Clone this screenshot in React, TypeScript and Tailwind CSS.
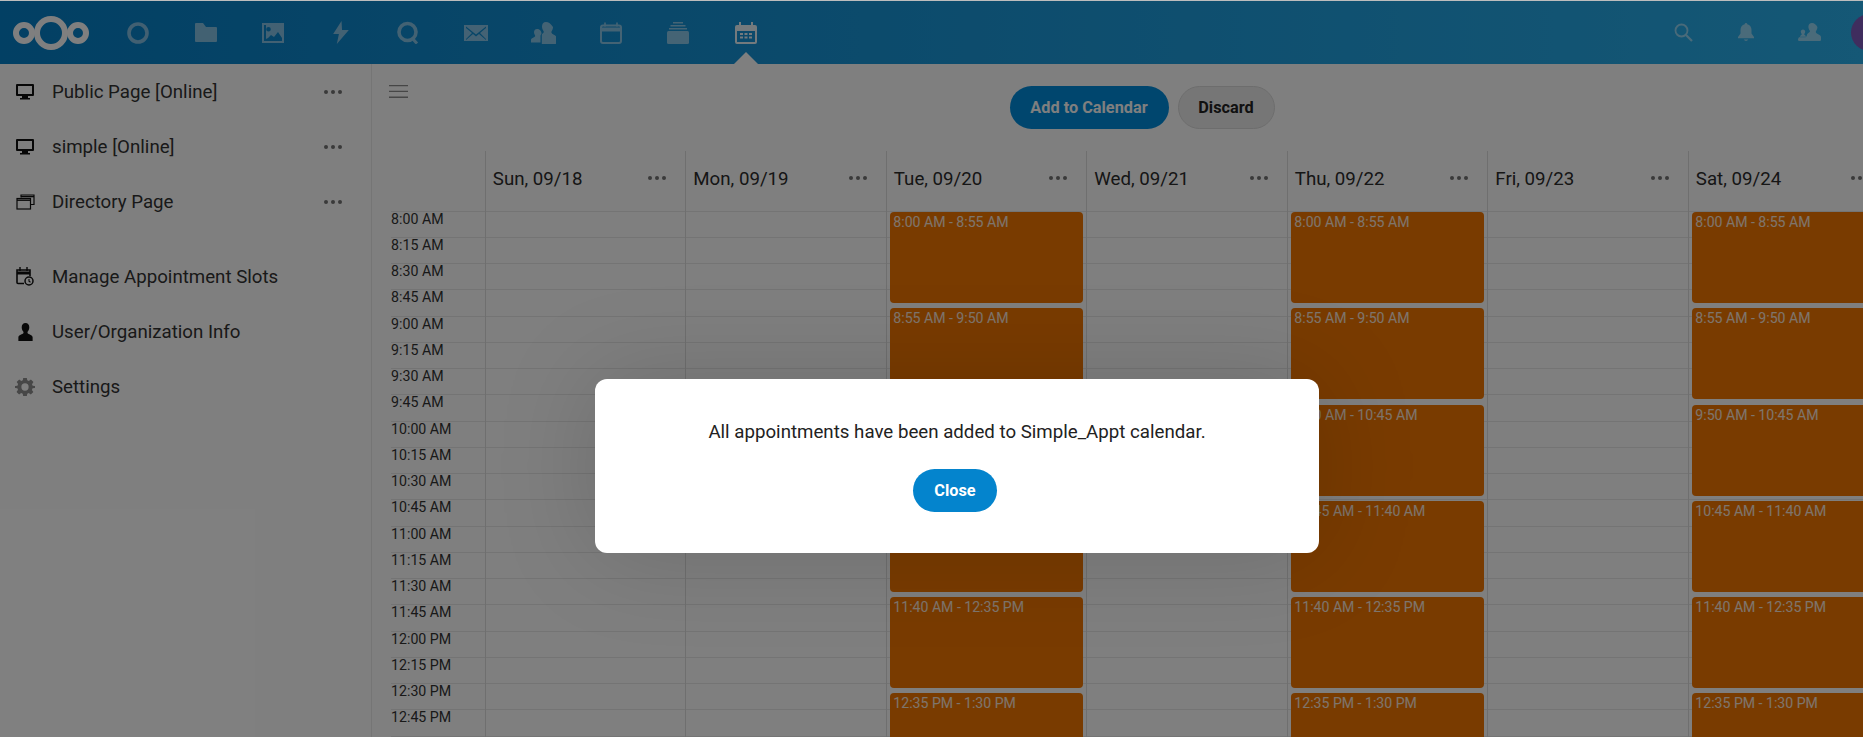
import type { ReactNode } from "react";

const slots = ["8:00", "8:15", "8:30", "8:45", "9:00", "9:15", "9:30", "9:45", "10:00", "10:15", "10:30", "10:45", "11:00", "11:15", "11:30", "11:45"];
const times = [
  ...slots.map((s) => `${s} AM`),
  "12:00 PM",
  "12:15 PM",
  "12:30 PM",
  "12:45 PM",
  "",
];
const days = [
  { label: "Sun, 09/18", booked: false },
  { label: "Mon, 09/19", booked: false },
  { label: "Tue, 09/20", booked: true },
  { label: "Wed, 09/21", booked: false },
  { label: "Thu, 09/22", booked: true },
  { label: "Fri, 09/23", booked: false },
  { label: "Sat, 09/24", booked: true },
];
const appointments = [
  "8:00 AM - 8:55 AM",
  "8:55 AM - 9:50 AM",
  "9:50 AM - 10:45 AM",
  "10:45 AM - 11:40 AM",
  "11:40 AM - 12:35 PM",
  "12:35 PM - 1:30 PM",
];

const logo = (
  <svg width="76" height="34" viewBox="0 0 76 34" fill="none" stroke="currentColor">
    <circle cx="11" cy="17" r="8" strokeWidth="6" />
    <circle cx="38" cy="17" r="14" strokeWidth="6" />
    <circle cx="65" cy="17" r="8" strokeWidth="6" />
  </svg>
);

const appIcons: ReactNode[] = [
  <svg width="22" height="22" viewBox="0 0 22 22" fill="none" stroke="currentColor">
    <circle cx="11" cy="11" r="9" strokeWidth="3.6" />
  </svg>,
  <svg width="22" height="19" viewBox="0 0 22 19" fill="currentColor">
    <path d="M0 1a1 1 0 011-1h7l3 4h10a1 1 0 011 1v13a1 1 0 01-1 1H1a1 1 0 01-1-1z" />
  </svg>,
  <svg width="22" height="20" viewBox="0 0 22 20" fill="currentColor">
    <path
      fillRule="evenodd"
      d="M0 0h22v20H0zM2 2v16h18v-3l-4-6-4 5-3-2-3 3-2 1V2zM6.500 4a2.300 2.300 0 100 4.600 2.300 2.300 0 000-4.600z"
    />
  </svg>,
  <svg className="ml-[1px]" width="16" height="23" viewBox="0 0 15 22" fill="currentColor">
    <path d="M8 0L0 12.500h5.500L3.500 22 15 8.500H8.500z" />
  </svg>,
  <svg width="22" height="23" viewBox="0 0 22 23" fill="none" stroke="currentColor">
    <circle cx="10.500" cy="11" r="8.500" strokeWidth="3.600" />
    <path d="M15 17l5 5.500" strokeWidth="3" />
  </svg>,
  <svg width="24" height="16" viewBox="0 0 24 16" fill="currentColor">
    <path
      fillRule="evenodd"
      d="M0 0h24v16H0zM2 1.500l10 8 10-8v1.500l-6 5 6 6v1l-7-6-3 2.500-3-2.500-7 6v-1l6-6-6-5z"
    />
  </svg>,
  <svg width="25" height="22" viewBox="0 0 25 22" fill="currentColor">
    <path d="M15 0c-2.600 0-4 2-4 4.500 0 1.800.7 3.300 1.500 4.400.4.500.3 1.300 0 1.800-.7 1-1.700 1-1.700 2.300V22h13c1.200 0 1.700-.6 1.700-1.500v-5c0-2.500-4.500-3-5-4.800-.2-.7-.1-1.300.3-1.800.8-1.100 1.200-2.600 1.200-4C20 2 17.600 0 15 0z" />
    <path d="M6 7c-2 0-3 1.500-3 3.300 0 1.200.5 2.200 1 3 .3.400.2.900 0 1.200C3.300 15.500 0 16 0 18v2.500h9.500V14c0-1 .8-1.500 1-2.500 0-2.400-2-4.500-4.500-4.500z" />
  </svg>,
  <svg width="22" height="22" viewBox="0 0 22 22" fill="none" stroke="currentColor">
    <path d="M5 0.500v4M17 0.500v4" strokeWidth="1.600" />
    <rect x="1" y="3.500" width="20" height="17.500" rx="2" strokeWidth="2" />
    <path d="M1 7.500h20" strokeWidth="4" />
  </svg>,
  <svg width="22" height="22" viewBox="0 0 22 22" fill="currentColor">
    <path d="M6 0h10v1.500H6zM3.500 3h15v1.500h-15zM2 6h18v1.500H2z" />
    <rect y="9" width="22" height="13" rx="1.500" />
  </svg>,
  <svg width="22" height="22" viewBox="0 0 22 22" fill="currentColor">
    <path
      fillRule="evenodd"
      d="M4 0h2v3h10V0h2v3h2a2 2 0 012 2v15a2 2 0 01-2 2H2a2 2 0 01-2-2V5a2 2 0 012-2h2zM2 9v11h18V9zM5 11h3v2H5zM9.500 11h3v2h-3zM14 11h3v2h-3zM5 14.500h3v2H5zM9.500 14.500h3v2h-3zM14 14.500h3v2h-3z"
    />
  </svg>,
];

const rightIcons: ReactNode[] = [
  <svg width="19" height="19" viewBox="0 0 19 19" fill="none" stroke="currentColor" strokeWidth="1.800">
    <circle cx="7.500" cy="7.500" r="6" />
    <path d="M12 12l6 6" strokeWidth="2.200" />
  </svg>,
  <svg width="16" height="19" viewBox="0 0 16 19" fill="currentColor">
    <path d="M8 0c-.8 0-1.300.6-1.300 1.300C4 2 2.500 4.200 2.500 7v3.500L0 14v1.300h16V14l-2.500-3.500V7c0-2.800-1.500-5-4.200-5.700C9.300.6 8.800 0 8 0zM5.800 16.500a2.400 2.400 0 004.400 0z" />
  </svg>,
  <svg width="23" height="20" viewBox="0 0 23 20" fill="currentColor">
    <path d="M14 0c-2.300 0-3.600 1.700-3.600 3.800 0 1.500.6 2.800 1.300 3.700.4.500.3 1.100 0 1.500-.6.800-2.700 1.400-2.700 2.800 0 .6-.4 2-1.500 2.500H1c-.6.800-1 1.500-1 2.200 0 1 .7 1.500 1.500 1.500h20c.9 0 1.500-.5 1.500-1.500v-2.500c0-2.500-4.600-2.900-5.100-4.500-.2-.7-.1-1.300.3-1.800.7-.9 1.200-2.300 1.200-3.700C18.400 1.700 16.300 0 14 0z" />
    <path d="M5 6.500c-1.300 0-2.200 1-2.200 2.200 0 .8.400 1.600.8 2.100.2.300.2.700 0 1-.4.500-1.600.9-1.600 2h6c0-1.100-1.200-1.500-1.600-2-.2-.3-.2-.7 0-1 .4-.5.800-1.300.8-2.100 0-1.200-.9-2.200-2.200-2.200z" />
  </svg>,
];

function Dots() {
  return (
    <span className="flex gap-[3px] shrink-0">
      <span className="w-[4px] h-[4px] rounded-full bg-[#747474]" />
      <span className="w-[4px] h-[4px] rounded-full bg-[#747474]" />
      <span className="w-[4px] h-[4px] rounded-full bg-[#747474]" />
    </span>
  );
}

function NavRow({ icon, label, menu }: { icon: ReactNode; label: string; menu?: boolean }) {
  return (
    <div className="flex items-center h-[55px] pr-[29px] text-[18.7px] text-[#333333]">
      <span className="w-[50px] flex justify-center shrink-0 text-[#111111]">{icon}</span>
      <span className="ml-[2px] pt-[2px] flex-1 truncate">{label}</span>
      {menu && <Dots />}
    </div>
  );
}

const monitor = (
  <svg width="18" height="16" viewBox="0 0 18 16" fill="currentColor">
    <path
      fillRule="evenodd"
      d="M1 0h16a1 1 0 011 1v10a1 1 0 01-1 1h-5v2h2v1.500H4V14h2v-2H1a1 1 0 01-1-1V1a1 1 0 011-1zm1 2v8h14V2z"
    />
  </svg>
);

function Day({ label, booked }: { label: string; booked: boolean }) {
  return (
    <div className="w-[200.5px] shrink-0 border-l border-[#dedede] text-[#2c2c2c]">
      <div className="h-[60px] flex items-start justify-between pl-[7px] pr-[19px] pt-[17px]">
        <span className="text-[18.7px] leading-[22px]">{label}</span>
        <span className="mt-[8px]">
          <Dots />
        </span>
      </div>
      <div className="relative">
        {times.map((t, i) => (
          <div key={t} className={`border-t border-[#e8e8e8] ${i % 4 === 3 ? "h-[27px]" : "h-[26px]"}`} />
        ))}
        {booked &&
          appointments.map((a, i) => (
            <div
              key={a}
              className="absolute left-[3px] w-[193px] h-[91px] rounded-[4px] bg-[#f27600] text-white/85 text-[14.1px] leading-4 pl-[3.5px] pt-[2px]"
              style={{ top: i * 96.25 + 1 }}
            >
              {a}
            </div>
          ))}
      </div>
    </div>
  );
}

export default function App() {
  return (
    <div className="relative h-screen w-full overflow-hidden bg-white font-['Roboto',sans-serif]">
      <div className="h-px bg-[#bdbdbd]" />
      <header className="h-[63px] flex items-center overflow-hidden text-white bg-linear-to-r from-[#0580c8] to-[#2ab0ec]">
        <div className="w-[104.5px] pl-[13px] shrink-0">{logo}</div>
        {appIcons.map((icon, i) => (
          <div key={i} className="relative w-[67.5px] h-full shrink-0 flex items-center justify-center">
            <span className={i === 9 ? "opacity-90" : "opacity-50"}>{icon}</span>
            {i === 9 && (
              <span className="absolute bottom-0 left-1/2 -translate-x-1/2 w-0 h-0 border-x-[12px] border-x-transparent border-b-[12px] border-b-white" />
            )}
          </div>
        ))}
        <div className="ml-auto mr-[-25px] flex items-center shrink-0">
          {rightIcons.map((icon, i) => (
            <div key={i} className="w-[63px] flex justify-center opacity-50">
              {icon}
            </div>
          ))}
          <div className="ml-[10.5px] w-[37px] h-[37px] rounded-full bg-[#7e5abc]" />
        </div>
      </header>

      <div className="flex h-[673px]">
        <aside className="w-[372px] shrink-0 border-r border-[#ebebeb]">
          <NavRow icon={monitor} label="Public Page [Online]" menu />
          <NavRow icon={monitor} label="simple [Online]" menu />
          <NavRow
            icon={
              <svg width="19" height="16" viewBox="0 0 19 16" fill="none" stroke="currentColor" strokeWidth="1.200">
                <path d="M5 3.500V1h13v9.500h-3.500" />
                <path d="M5 2.600h13" strokeWidth="1.400" />
                <rect x="1" y="4.500" width="13.500" height="10.500" />
                <path d="M1 6.200h13.500" strokeWidth="1.400" />
              </svg>
            }
            label="Directory Page"
            menu
          />
          <div className="h-[20px]" />
          <NavRow
            icon={
              <svg width="18" height="19" viewBox="0 0 18 19" fill="none" stroke="currentColor">
                <path d="M4 0v4M11 0v4" strokeWidth="1.400" />
                <path d="M8 16.500H2a1 1 0 01-1-1V3h13v6" strokeWidth="1.600" />
                <path d="M1 6h13" strokeWidth="3" />
                <circle cx="13" cy="14" r="4" strokeWidth="1.500" />
                <path d="M13 12v2.300l1.500 1" strokeWidth="1.100" />
              </svg>
            }
            label="Manage Appointment Slots"
          />
          <NavRow
            icon={
              <svg width="19" height="20" viewBox="0 0 16 16" fill="currentColor">
                <path d="M8 .5C6 .5 4.800 2 4.800 4c0 1.400.6 2.800 1.300 3.600.3.400.3 1 .1 1.400-.4.8-4.200 1.300-4.200 3.500v3h12v-3c0-2.200-3.800-2.700-4.200-3.500-.2-.4-.2-1 .1-1.400.7-.8 1.300-2.200 1.300-3.600C11.200 2 10 .5 8 .5z" />
              </svg>
            }
            label="User/Organization Info"
          />
          <NavRow
            icon={
              <svg width="20" height="20" viewBox="-1 0 22 20" fill="#8e8e8e">
                <path
                  fillRule="evenodd"
                  d="M8 0h4l.5 2.700 1.700.7 2.300-1.600 2.800 2.800-1.600 2.300.7 1.700L21 9V11l-2.700.5-.7 1.700 1.600 2.300-2.800 2.800-2.300-1.600-1.600.7L12 20H8l-.5-2.700-1.700-.7-2.300 1.600-2.800-2.800 1.600-2.300-.7-1.700L-1 11V9l2.700-.5.7-1.700-1.600-2.300 2.800-2.800 2.300 1.600 1.700-.7zM10 6a4 4 0 100 8 4 4 0 000-8z"
                />
              </svg>
            }
            label="Settings"
          />
        </aside>

        <main className="flex-1 min-w-0 overflow-hidden">
          <div className="w-[1540px]">
            <div className="h-[87px] grid grid-cols-[1fr_auto_1fr] items-start">
              <svg className="ml-[17px] mt-[21px] text-[#8c8c8c]" width="19" height="13" viewBox="0 0 19 13" fill="currentColor">
                <path d="M0 0h19v1.300H0zM0 5.800h19v1.300H0zM0 11.600h19v1.300H0z" />
              </svg>
              <div className="flex gap-[9px] mt-[22px]">
                <button className="h-[43px] w-[159px] pt-[2px] rounded-full bg-[#008cdc] text-white text-[16.3px] font-bold">
                  Add to Calendar
                </button>
                <button className="h-[43px] w-[97px] pt-[2px] rounded-full bg-[#ededed] border border-[#dbdbdb] text-[#222222] text-[16.3px] font-bold">
                  Discard
                </button>
              </div>
            </div>
            <div className="flex">
              <div className="w-[112.8px] shrink-0 pl-[19px] text-[14.2px] leading-[14px] text-[#333333]">
                <div className="h-[60px]" />
                {times.map((t, i) => (
                  <div key={t} className={`border-t border-[#e8e8e8] ${i % 4 === 3 ? "h-[27px]" : "h-[26px]"}`}>
                    {t}
                  </div>
                ))}
              </div>
              {days.map((d) => (
                <Day key={d.label} label={d.label} booked={d.booked} />
              ))}
            </div>
          </div>
        </main>
      </div>

      <div className="absolute inset-x-0 top-px bottom-0 bg-black/50 pl-[595px] pt-[378px]">
        <div className="w-[724px] h-[174px] rounded-[12px] bg-white shadow-[0_0_100px_rgba(0,0,0,0.15)] flex flex-col items-center pt-[42px] text-[18.7px] leading-[22px] text-[#222222]">
          <p>All appointments have been added to Simple_Appt calendar.</p>
          <button className="mt-[26px] mr-[4px] h-[43px] w-[84px] rounded-full bg-[#0484cd] text-white text-[16.3px] font-bold">
            Close
          </button>
        </div>
      </div>
    </div>
  );
}
